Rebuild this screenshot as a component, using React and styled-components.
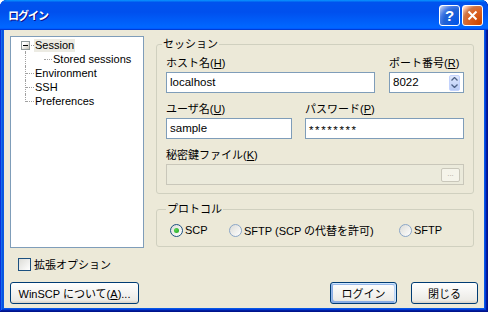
import React from "react";
import styled, { createGlobalStyle } from "styled-components";

// XP-style "ログイン" dialog
const GlobalStyle = createGlobalStyle`
  html, body {
    margin: 0;
    padding: 0;
    background: #ffffff;
  }
  body {
    font-family: "Liberation Sans", "Noto Sans CJK JP", sans-serif;
    font-size: 11px;
    color: #000;
  }
`;

const Window = styled.div`
  width: 488px;
  height: 312px;
  box-sizing: border-box;
  display: flex;
  flex-direction: column;
  background: #0858e4;
  border-radius: 7px 7px 0 0;
  overflow: hidden;
  box-shadow: inset -1px -1px #00138c, inset 1px 1px #0831d9,
    inset -2px -2px #001ea0, inset 2px 2px #166aee, inset -3px -3px #003bda,
    inset 3px 3px #0855dd;
`;

const TitleBar = styled.div`
  height: 30px;
  flex: none;
  display: flex;
  align-items: center;
  padding: 0 5px 0 8px;
  background: linear-gradient(
    180deg,
    #0997ff,
    #0053ee 8%,
    #0050ee 40%,
    #0066ff 88%,
    #0066ff 93%,
    #005bff 95%,
    #003dd7 96%,
    #003dd7
  );
`;

const Title = styled.div`
  flex: 1;
  color: #fff;
  font-weight: bold;
  font-size: 11px;
  letter-spacing: -1px;
  text-shadow: 1px 1px #0f1089;
`;

const TitleButtons = styled.div`
  display: flex;
  gap: 2px;
`;

const TitleButton = styled.div`
  width: 21px;
  height: 21px;
  box-sizing: border-box;
  border: 1px solid #fff;
  border-radius: 3px;
  display: flex;
  align-items: center;
  justify-content: center;
  color: #fff;
  font: bold 15px "Liberation Sans", sans-serif;
  background: ${(p) =>
    p.$close
      ? "radial-gradient(circle at 90% 90%, #cc4600 0, #dc6527 55%, #cd7546 70%, #ffccb2 90%, #fff 100%)"
      : "radial-gradient(circle at 90% 90%, #0054e9 0, #2263d5 55%, #4479e4 70%, #a3bbec 90%, #fff 100%)"};
`;

const Client = styled.div`
  flex: 1;
  margin: 0 4px 4px;
  background: #ece9d8;
  padding: 6px 0 0;
  display: flex;
  flex-direction: column;
`;

const MainRow = styled.div`
  display: flex;
  gap: 12px;
  height: 212px;
  margin: 0 10px 0 6px;
`;

/* ---------- tree ---------- */

const Tree = styled.div`
  width: 134px;
  flex: none;
  box-sizing: border-box;
  background: #fff;
  border: 1px solid #7f9db9;
  padding: 1px 0 0 7px;
`;

const TreeRow = styled.div`
  display: flex;
  align-items: center;
  height: 14px;
`;

const Branch = styled.span`
  position: relative;
  flex: none;
  width: 16px;
  height: 14px;
  margin-left: ${(p) => p.$shift || 0}px;

  &::before {
    content: "";
    display: ${(p) => (p.$noVert ? "none" : "block")};
    position: absolute;
    left: 7px;
    top: ${(p) => (p.$fromMid ? "7px" : "0")};
    bottom: ${(p) => (p.$toMid ? "6px" : "0")};
    border-left: 1px dotted #a0a0a0;
  }
  &::after {
    content: "";
    display: ${(p) => (p.$noHoriz ? "none" : "block")};
    position: absolute;
    left: 8px;
    right: 0;
    top: 7px;
    border-top: 1px dotted #a0a0a0;
  }
`;

const Expander = styled.span`
  position: absolute;
  left: 3px;
  top: 3px;
  z-index: 1;
  width: 9px;
  height: 9px;
  box-sizing: border-box;
  border: 1px solid #919b9c;
  background: linear-gradient(135deg, #fff 30%, #c4c1b4);
  display: flex;
  align-items: center;
  justify-content: center;

  &::after {
    content: "";
    width: 5px;
    height: 1px;
    background: #000;
  }
`;

const TreeLabel = styled.span`
  padding: 0 1px;
  line-height: 13px;
  white-space: nowrap;
  background: ${(p) => (p.$selected ? "#ecebe3" : "transparent")};
`;

/* ---------- groups ---------- */

const RightCol = styled.div`
  flex: 1;
  display: flex;
  flex-direction: column;
  padding-top: 2px;
`;

const Group = styled.fieldset`
  margin: ${(p) => p.$gapTop || 0}px 0 0;
  padding: ${(p) => p.$pad};
  border: 1px solid #d0d0bf;
  border-radius: 3px;
  min-width: 0;
`;

const Legend = styled.legend`
  margin-left: -4px;
  padding: 0 1px;
  line-height: 12px;
`;

const Fields = styled.div`
  display: flex;
  flex-direction: column;
  gap: 9px;
`;

const FieldRow = styled.div`
  display: grid;
  grid-template-columns: ${(p) => p.$cols};
  column-gap: ${(p) => p.$gap}px;
`;

const Field = styled.div`
  display: flex;
  flex-direction: column;
  gap: 2px;
`;

const Label = styled.div`
  height: 14px;
  line-height: 14px;
  white-space: nowrap;
`;

const TextBox = styled.div`
  height: 21px;
  box-sizing: border-box;
  border: 1px solid ${(p) => (p.$disabled ? "#c9c7ba" : "#7f9db9")};
  background: ${(p) => (p.$disabled ? "#ebeadb" : "#fff")};
  display: flex;
  align-items: center;
  justify-content: ${(p) => (p.$disabled ? "flex-end" : "flex-start")};
  padding: ${(p) => (p.$masked ? "4px 3px 0" : "0 3px")};
  line-height: 19px;
  font-size: 11.5px;
  letter-spacing: ${(p) => (p.$masked ? "1.6px" : "0")};
  white-space: nowrap;
`;

const TextValue = styled.span`
  flex: 1;
`;

const Spin = styled.div`
  width: 11px;
  height: 16px;
  display: flex;
  flex-direction: column;
  border-radius: 2px;
  background: linear-gradient(180deg, #dfe8fd, #b8cbf5);
  border: 1px solid #c3d3fd;
  box-sizing: border-box;
`;

const SpinHalf = styled.div`
  flex: 1;
  display: flex;
  align-items: center;
  justify-content: center;
`;

const BrowseButton = styled.div`
  width: 19px;
  height: 14px;
  box-sizing: border-box;
  border: 1px solid #c9c7ba;
  border-radius: 2px;
  background: #f5f4ea;
  color: #aca899;
  font-size: 8px;
  line-height: 10px;
  text-align: center;
  letter-spacing: 0;
`;

/* ---------- radios / checkbox ---------- */

const RadioRow = styled.div`
  display: grid;
  grid-template-columns: 59px 170px auto;
  height: 13px;
  align-items: center;
`;

const RadioItem = styled.label`
  display: flex;
  align-items: center;
  gap: 2px;
  white-space: nowrap;
`;

const RadioDot = styled.span`
  width: 13px;
  height: 13px;
  box-sizing: border-box;
  border-radius: 50%;
  border: 1px solid ${(p) => (p.$checked ? "#1c5180" : "#8aa6c8")};
  background: linear-gradient(135deg, #dcdcd7, #fff);
  display: flex;
  align-items: center;
  justify-content: center;

  &::after {
    content: "";
    display: ${(p) => (p.$checked ? "block" : "none")};
    width: 5px;
    height: 5px;
    border-radius: 50%;
    background: radial-gradient(circle at 35% 35%, #55d651, #21a121);
  }
`;

const CheckRow = styled.label`
  display: flex;
  align-items: center;
  gap: 3px;
  height: 14px;
  margin: 9px 0 0 14px;
`;

const CheckBox = styled.span`
  width: 13px;
  height: 13px;
  box-sizing: border-box;
  border: 1px solid #1c5180;
  background: linear-gradient(135deg, #dcdcd7, #fff);
`;

/* ---------- buttons ---------- */

const ButtonRow = styled.div`
  display: flex;
  align-items: center;
  margin: 11px 6px 0;
`;

const Spacer = styled.div`
  flex: 1;
`;

const Button = styled.button`
  font: inherit;
  width: ${(p) => p.$w}px;
  height: 22px;
  margin-left: ${(p) => p.$ml || 0}px;
  box-sizing: border-box;
  padding: 0;
  color: #000;
  border: 1px solid #003c74;
  border-radius: 3px;
  background: linear-gradient(180deg, #fff, #ecebe6 86%, #d6d0c5);
  white-space: nowrap;
  box-shadow: ${(p) =>
    p.$default
      ? "inset -1px 1px #cee7ff, inset 1px 2px #98b8ea, inset -2px 2px #bcd4f6, inset 1px -1px #89ade4, inset 2px -2px #89ade4"
      : "none"};
`;

const treeItems = [
  { label: "Session", selected: true, kind: "root" },
  { label: "Stored sessions", kind: "child" },
  { label: "Environment", kind: "mid" },
  { label: "SSH", kind: "mid" },
  { label: "Preferences", kind: "last" },
];

const ChevronUp = () => (
  <svg width="7" height="4" viewBox="0 0 7 4">
    <path d="M0.5 3.5 L3.5 0.5 L6.5 3.5" fill="none" stroke="#4d6185" strokeWidth="1.3" />
  </svg>
);

const ChevronDown = () => (
  <svg width="7" height="4" viewBox="0 0 7 4">
    <path d="M0.5 0.5 L3.5 3.5 L6.5 0.5" fill="none" stroke="#4d6185" strokeWidth="1.3" />
  </svg>
);

const TreeItem = ({ item }) => {
  if (item.kind === "root") {
    return (
      <TreeRow>
        <Branch $fromMid>
          <Expander />
        </Branch>
        <TreeLabel $selected={item.selected}>{item.label}</TreeLabel>
      </TreeRow>
    );
  }
  if (item.kind === "child") {
    return (
      <TreeRow>
        <Branch $noHoriz />
        <Branch $noVert $shift={2} />
        <TreeLabel>{item.label}</TreeLabel>
      </TreeRow>
    );
  }
  return (
    <TreeRow>
      <Branch $toMid={item.kind === "last"} />
      <TreeLabel>{item.label}</TreeLabel>
    </TreeRow>
  );
};

const App = () => {
  return (
    <>
      <GlobalStyle />
      <Window>
        <TitleBar>
          <Title>ログイン</Title>
          <TitleButtons>
            <TitleButton>?</TitleButton>
            <TitleButton $close>
              <svg width="11" height="11" viewBox="0 0 11 11">
                <path d="M1.5 1.5 L9.5 9.5 M9.5 1.5 L1.5 9.5" stroke="#fff" strokeWidth="2" />
              </svg>
            </TitleButton>
          </TitleButtons>
        </TitleBar>

        <Client>
          <MainRow>
            <Tree>
              {treeItems.map((item) => (
                <TreeItem key={item.label} item={item} />
              ))}
            </Tree>

            <RightCol>
              <Group $pad="6px 9px 8px">
                <Legend>セッション</Legend>
                <Fields>
                  <FieldRow $cols="209px 75px" $gap={14}>
                    <Field>
                      <Label>
                        ホスト名(<u>H</u>)
                      </Label>
                      <TextBox>localhost</TextBox>
                    </Field>
                    <Field>
                      <Label>
                        ポート番号(<u>R</u>)
                      </Label>
                      <TextBox>
                        <TextValue>8022</TextValue>
                        <Spin>
                          <SpinHalf>
                            <ChevronUp />
                          </SpinHalf>
                          <SpinHalf>
                            <ChevronDown />
                          </SpinHalf>
                        </Spin>
                      </TextBox>
                    </Field>
                  </FieldRow>
                  <FieldRow $cols="126px 159px" $gap={13}>
                    <Field>
                      <Label>
                        ユーザ名(<u>U</u>)
                      </Label>
                      <TextBox>sample</TextBox>
                    </Field>
                    <Field>
                      <Label>
                        パスワード(<u>P</u>)
                      </Label>
                      <TextBox $masked>********</TextBox>
                    </Field>
                  </FieldRow>
                  <FieldRow $cols="298px" $gap={0}>
                    <Field>
                      <Label>
                        秘密鍵ファイル(<u>K</u>)
                      </Label>
                      <TextBox $disabled>
                        <BrowseButton>...</BrowseButton>
                      </TextBox>
                    </Field>
                  </FieldRow>
                </Fields>
              </Group>

              <Group $gapTop={9} $pad="7px 9px 11px 13px">
                <Legend>プロトコル</Legend>
                <RadioRow>
                  <RadioItem>
                    <RadioDot $checked />
                    SCP
                  </RadioItem>
                  <RadioItem>
                    <RadioDot />
                    SFTP (SCP の代替を許可)
                  </RadioItem>
                  <RadioItem>
                    <RadioDot />
                    SFTP
                  </RadioItem>
                </RadioRow>
              </Group>
            </RightCol>
          </MainRow>

          <CheckRow>
            <CheckBox />
            拡張オプション
          </CheckRow>

          <ButtonRow>
            <Button $w={129}>
              WinSCP について(<u>A</u>)...
            </Button>
            <Spacer />
            <Button $w={67} $default>
              ログイン
            </Button>
            <Button $w={67} $ml={14}>
              閉じる
            </Button>
          </ButtonRow>
        </Client>
      </Window>
    </>
  );
};

export default App;
